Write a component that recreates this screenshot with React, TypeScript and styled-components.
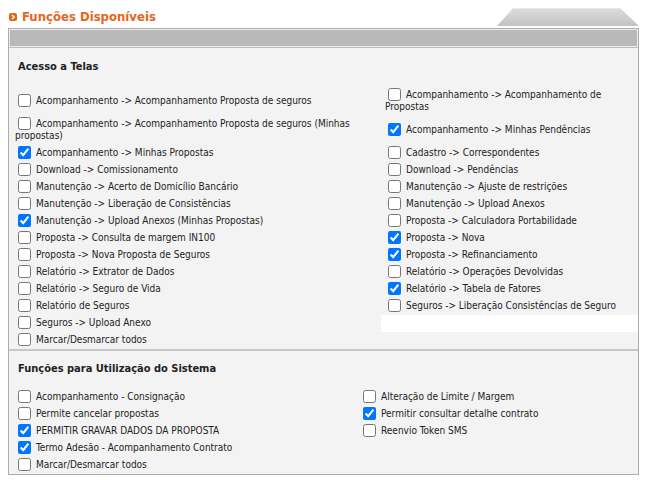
import React from "react";
import styled, { createGlobalStyle } from "styled-components";

const GlobalStyle = createGlobalStyle`
  html, body { margin: 0; padding: 0; background: #ffffff; }
  body { font-family: "DejaVu Sans Condensed", "DejaVu Sans", sans-serif; color: #222222; }
`;

const Page = styled.div`
  width: 631px;
  padding-left: 8px;
`;

const TitleRow = styled.div`
  display: flex;
  justify-content: space-between;
  align-items: flex-end;
  height: 26px;
  margin-bottom: 2px;
`;

const Title = styled.h1`
  display: flex;
  align-items: center;
  gap: 5px;
  margin: 0 0 3px 1px;
  font-size: 13px;
  line-height: 13px;
  font-weight: bold;
  color: #e8641c;
`;

const Tab = styled.div`
  width: 142px;
  height: 18px;
  background: linear-gradient(#dcdcdc, #c2c2c2);
  border-top: 1px solid #e8e8e8;
  box-sizing: border-box;
  clip-path: polygon(16px 0, 123px 0, 142px 100%, 0 100%);
`;

const Panel = styled.div`
  box-sizing: border-box;
  width: 631px;
  border: 1px solid #adadad;
  background: #f3f3f3;
`;

const HeaderBar = styled.div`
  height: 16px;
  background: #b9b9b9;
  border: 1px solid #ececec;
`;

const Section = styled.section<{ $divider?: boolean }>`
  padding: ${(p) => (p.$divider ? "11px" : "12px")} 0 0 2px;
  border-top: ${(p) => (p.$divider ? "2px solid #c8c8c8" : "1px solid #bdbdbd")};
`;

const SectionTitle = styled.h2`
  margin: 0 0 14px 7px;
  font-size: 11px;
  line-height: 13px;
  font-weight: bold;
  color: #222222;
`;

const Grid = styled.div<{ $left: number }>`
  display: grid;
  grid-template-columns: ${(p) => p.$left}px 1fr;
  align-items: center;
`;

const Cell = styled.div<{ $blank?: boolean }>`
  padding: 0 4px;
  align-self: ${(p) => (p.$blank ? "stretch" : "center")};
  background: ${(p) => (p.$blank ? "#ffffff" : "transparent")};
  min-height: ${(p) => (p.$blank ? "17px" : "0")};
`;

const Item = styled.label`
  display: block;
  padding: 2px 0 3px;
  font-size: 10px;
  line-height: 12px;
  color: #222222;
`;

const Box = styled.input`
  width: 13px;
  height: 13px;
  margin: -1px 5px 0 3px;
  vertical-align: top;
  accent-color: #0075ff;
`;

const Chevron = () => (
  <svg width="8" height="8" viewBox="0 0 8 8" aria-hidden="true">
    <rect x="0" y="0" width="8" height="8" rx="2" fill="#e8641c" />
    <path d="M3 2 L5.2 4 L3 6" stroke="#ffffff" strokeWidth="1.4" fill="none" />
  </svg>
);

type Opt = { label: string; checked?: boolean } | "blank" | null;

const Check = ({ label, checked }: { label: string; checked?: boolean }) => (
  <Item>
    <Box type="checkbox" defaultChecked={checked} />
    {label}
  </Item>
);

const renderCell = (o: Opt, key: string) => {
  if (o === "blank") return <Cell key={key} $blank />;
  if (o === null) return <Cell key={key} />;
  return (
    <Cell key={key}>
      <Check label={o.label} checked={o.checked} />
    </Cell>
  );
};

const telas: [Opt, Opt][] = [
  [
    { label: "Acompanhamento -> Acompanhamento Proposta de seguros" },
    { label: "Acompanhamento -> Acompanhamento de Propostas" },
  ],
  [
    { label: "Acompanhamento -> Acompanhamento Proposta de seguros (Minhas propostas)" },
    { label: "Acompanhamento -> Minhas Pendências", checked: true },
  ],
  [
    { label: "Acompanhamento -> Minhas Propostas", checked: true },
    { label: "Cadastro -> Correspondentes" },
  ],
  [{ label: "Download -> Comissionamento" }, { label: "Download -> Pendências" }],
  [
    { label: "Manutenção -> Acerto de Domicílio Bancário" },
    { label: "Manutenção -> Ajuste de restrições" },
  ],
  [
    { label: "Manutenção -> Liberação de Consistências" },
    { label: "Manutenção -> Upload Anexos" },
  ],
  [
    { label: "Manutenção -> Upload Anexos (Minhas Propostas)", checked: true },
    { label: "Proposta -> Calculadora Portabilidade" },
  ],
  [{ label: "Proposta -> Consulta de margem IN100" }, { label: "Proposta -> Nova", checked: true }],
  [
    { label: "Proposta -> Nova Proposta de Seguros" },
    { label: "Proposta -> Refinanciamento", checked: true },
  ],
  [
    { label: "Relatório -> Extrator de Dados" },
    { label: "Relatório -> Operações Devolvidas" },
  ],
  [
    { label: "Relatório -> Seguro de Vida" },
    { label: "Relatório -> Tabela de Fatores", checked: true },
  ],
  [
    { label: "Relatório de Seguros" },
    { label: "Seguros -> Liberação Consistências de Seguro" },
  ],
  [{ label: "Seguros -> Upload Anexo" }, "blank"],
  [{ label: "Marcar/Desmarcar todos" }, null],
];

const sistema: [Opt, Opt][] = [
  [{ label: "Acompanhamento - Consignação" }, { label: "Alteração de Limite / Margem" }],
  [
    { label: "Permite cancelar propostas" },
    { label: "Permitir consultar detalhe contrato", checked: true },
  ],
  [{ label: "PERMITIR GRAVAR DADOS DA PROPOSTA", checked: true }, { label: "Reenvio Token SMS" }],
  [{ label: "Termo Adesão - Acompanhamento Contrato", checked: true }, null],
  [{ label: "Marcar/Desmarcar todos" }, null],
];

export default function App() {
  return (
    <>
      <GlobalStyle />
      <Page>
        <TitleRow>
          <Title>
            <Chevron />
            Funções Disponíveis
          </Title>
          <Tab />
        </TitleRow>
        <Panel>
          <HeaderBar />
          <Section>
            <SectionTitle>Acesso a Telas</SectionTitle>
            <Grid $left={370}>
              {telas.map(([l, r], i) => [renderCell(l, `l${i}`), renderCell(r, `r${i}`)])}
            </Grid>
          </Section>
          <Section $divider>
            <SectionTitle>Funções para Utilização do Sistema</SectionTitle>
            <Grid $left={345}>
              {sistema.map(([l, r], i) => [renderCell(l, `sl${i}`), renderCell(r, `sr${i}`)])}
            </Grid>
          </Section>
        </Panel>
      </Page>
    </>
  );
}
